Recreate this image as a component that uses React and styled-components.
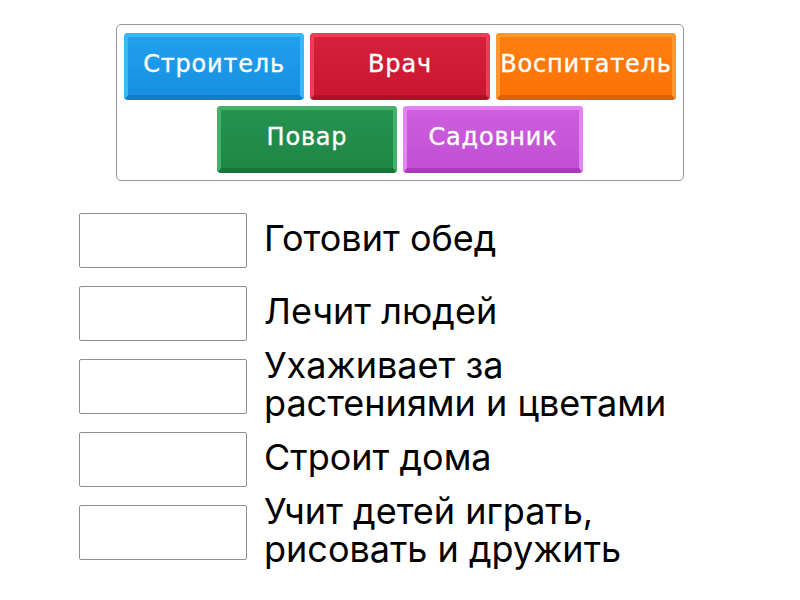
import React from 'react';
import styled, { createGlobalStyle } from 'styled-components';

const GlobalStyle = createGlobalStyle`
  body {
    margin: 0;
    background: #fff;
    font-family: Inter, "Noto Sans", sans-serif;
  }
`;

const Page = styled.div`
  width: 800px;
  height: 600px;
  padding-top: 24px;
  box-sizing: border-box;
  display: flex;
  flex-direction: column;
  align-items: center;
`;

const Bank = styled.div`
  width: 568px;
  box-sizing: border-box;
  border: 1px solid #9a9a9a;
  border-radius: 5px;
  padding: 8px 7px 7px;
  display: flex;
  flex-wrap: wrap;
  justify-content: center;
  gap: 6px;
`;

const palette = {
  blue: { light: '#3cb6fb', face: '#21a0ee', faceLow: '#1690e0', dark: '#0f7fcc' },
  red: { light: '#ec3d57', face: '#d6213b', faceLow: '#c9152f', dark: '#b00f26' },
  orange: { light: '#ff982e', face: '#ff7f0f', faceLow: '#fb7205', dark: '#de6200' },
  green: { light: '#45b06c', face: '#259250', faceLow: '#1f8746', dark: '#177538' },
  purple: { light: '#e582f4', face: '#cd5ede', faceLow: '#c24fd5', dark: '#a93bbd' },
};

const Tile = styled.div`
  width: 180px;
  height: 67px;
  box-sizing: border-box;
  padding-bottom: 4px;
  border-radius: 4px;
  border-style: solid;
  border-width: 4px 4px 5px 4px;
  border-color: ${p => palette[p.$tone].light} ${p => palette[p.$tone].light}
    ${p => palette[p.$tone].dark} ${p => palette[p.$tone].light};
  background: linear-gradient(${p => palette[p.$tone].face}, ${p => palette[p.$tone].faceLow});
  color: #fff;
  font-family: "DejaVu Sans", "Liberation Sans", sans-serif;
  font-size: 24px;
  letter-spacing: 0.8px;
  -webkit-text-stroke: 0.35px #fff;
  display: flex;
  align-items: center;
  justify-content: center;
  white-space: nowrap;
`;

const List = styled.div`
  margin-top: 32px;
  width: 800px;
  padding-left: 79px;
  box-sizing: border-box;
  display: flex;
  flex-direction: column;
  gap: 18px;
`;

const Row = styled.div`
  height: 55px;
  display: flex;
  align-items: center;
  gap: 17px;
`;

const Slot = styled.div`
  width: 168px;
  height: 55px;
  flex: none;
  box-sizing: border-box;
  border: 1px solid #8f8f8f;
  border-radius: 2px;
`;

const Clue = styled.div`
  font-size: 36px;
  line-height: 38px;
  margin-bottom: 5px;
  color: #000;
  max-width: 412px;
`;

const tiles = [
  ['Строитель', 'blue'],
  ['Врач', 'red'],
  ['Воспитатель', 'orange'],
  ['Повар', 'green'],
  ['Садовник', 'purple'],
];

const clues = [
  'Готовит обед',
  'Лечит людей',
  'Ухаживает за растениями и цветами',
  'Строит дома',
  'Учит детей играть, рисовать и дружить',
];

export default function App() {
  return (
    <Page>
      <GlobalStyle />
      <Bank>
        {tiles.map(([label, tone]) => (
          <Tile key={label} $tone={tone}>{label}</Tile>
        ))}
      </Bank>
      <List>
        {clues.map(text => (
          <Row key={text}>
            <Slot />
            <Clue>{text}</Clue>
          </Row>
        ))}
      </List>
    </Page>
  );
}
